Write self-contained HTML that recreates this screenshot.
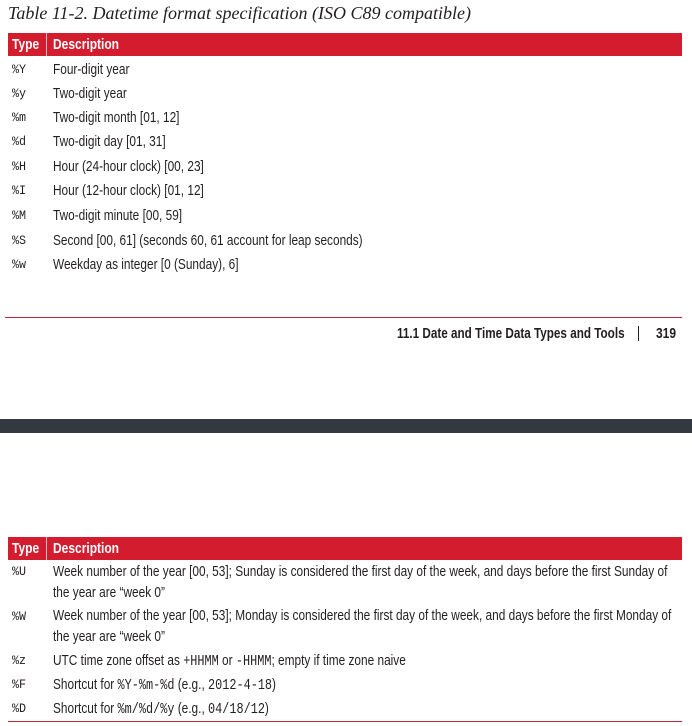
<!DOCTYPE html>
<html><head><meta charset="utf-8"><style>
body{margin:0;width:692px;height:726px;background:#fff;position:relative;overflow:hidden;font-family:"Liberation Sans",sans-serif;color:#231f20}
.a{position:absolute;white-space:nowrap;line-height:16px;font-size:15px;transform:scaleX(.79);transform-origin:0 50%;margin-top:1px}
.c{position:absolute;white-space:nowrap;line-height:16px;font-family:"Liberation Mono",monospace;font-size:13px;transform:scaleX(.9);transform-origin:0 50%;margin-top:1px}
.m{font-family:"Liberation Mono",monospace;font-size:15px}
.bar{position:absolute;left:8px;width:674px;height:23px;background:#d31d2e}
.h{position:absolute;color:#fff;font-weight:bold;font-size:15px;line-height:23px;transform:scaleX(.8);transform-origin:0 50%;white-space:nowrap}
.sep{position:absolute;width:1px;height:23px;background:#f2b5bb;left:38px}
.r{position:absolute;left:8px;width:674px;height:1px;background:#c0283a}
</style></head><body>
<div style="position:absolute;left:8px;top:3px;font-family:'Liberation Serif',serif;font-style:italic;font-size:18px;line-height:20px;white-space:nowrap">Table 11-2. Datetime format specification (ISO C89 compatible)</div>
<div class="bar" style="top:33px"><div class="sep" style="top:0"></div><div class="h" style="left:4px">Type</div><div class="h" style="left:45px">Description</div></div>
<div class="c" style="left:12px;top:61px">%Y</div><div class="a" style="left:53px;top:61px">Four-digit year</div>
<div class="c" style="left:12px;top:85px">%y</div><div class="a" style="left:53px;top:85px">Two-digit year</div>
<div class="c" style="left:12px;top:109px">%m</div><div class="a" style="left:53px;top:109px">Two-digit month [01, 12]</div>
<div class="c" style="left:12px;top:133px">%d</div><div class="a" style="left:53px;top:133px">Two-digit day [01, 31]</div>
<div class="c" style="left:12px;top:158px">%H</div><div class="a" style="left:53px;top:158px">Hour (24-hour clock) [00, 23]</div>
<div class="c" style="left:12px;top:182px">%I</div><div class="a" style="left:53px;top:182px">Hour (12-hour clock) [01, 12]</div>
<div class="c" style="left:12px;top:207px">%M</div><div class="a" style="left:53px;top:207px">Two-digit minute [00, 59]</div>
<div class="c" style="left:12px;top:232px">%S</div><div class="a" style="left:53px;top:232px">Second [00, 61] (seconds 60, 61 account for leap seconds)</div>
<div class="c" style="left:12px;top:256px">%w</div><div class="a" style="left:53px;top:256px">Weekday as integer [0 (Sunday), 6]</div>
<div class="r" style="top:317px;left:5px;width:677px"></div>
<div class="a" style="left:397px;top:325px;font-weight:bold;transform:scaleX(.78)">11.1 Date and Time Data Types and Tools</div>
<div style="position:absolute;left:638px;top:326px;width:1px;height:15px;background:#231f20"></div>
<div class="a" style="left:656px;top:325px;font-weight:bold;transform:scaleX(.8)">319</div>
<div style="position:absolute;left:0;top:419px;width:692px;height:14px;background:#343841"></div>
<div class="bar" style="top:537px"><div class="sep" style="top:0"></div><div class="h" style="left:4px">Type</div><div class="h" style="left:45px">Description</div></div>
<div class="c" style="left:12px;top:563px">%U</div><div class="a" style="left:53px;top:563px">Week number of the year [00, 53]; Sunday is considered the first day of the week, and days before the first Sunday of</div>
<div class="a" style="left:53px;top:584px">the year are “week 0”</div>
<div class="c" style="left:12px;top:608px">%W</div><div class="a" style="left:53px;top:607px">Week number of the year [00, 53]; Monday is considered the first day of the week, and days before the first Monday of</div>
<div class="a" style="left:53px;top:628px">the year are “week 0”</div>
<div class="c" style="left:12px;top:652px">%z</div><div class="a" style="left:53px;top:652px">UTC time zone offset as <span class="m">+HHMM</span> or <span class="m">-HHMM</span>; empty if time zone naive</div>
<div class="c" style="left:12px;top:676px">%F</div><div class="a" style="left:53px;top:676px">Shortcut for <span class="m">%Y-%m-%d</span> (e.g., <span class="m">2012-4-18</span>)</div>
<div class="c" style="left:12px;top:700px">%D</div><div class="a" style="left:53px;top:700px">Shortcut for <span class="m">%m/%d/%y</span> (e.g., <span class="m">04/18/12</span>)</div>
<div class="r" style="top:721px"></div>
</body></html>
